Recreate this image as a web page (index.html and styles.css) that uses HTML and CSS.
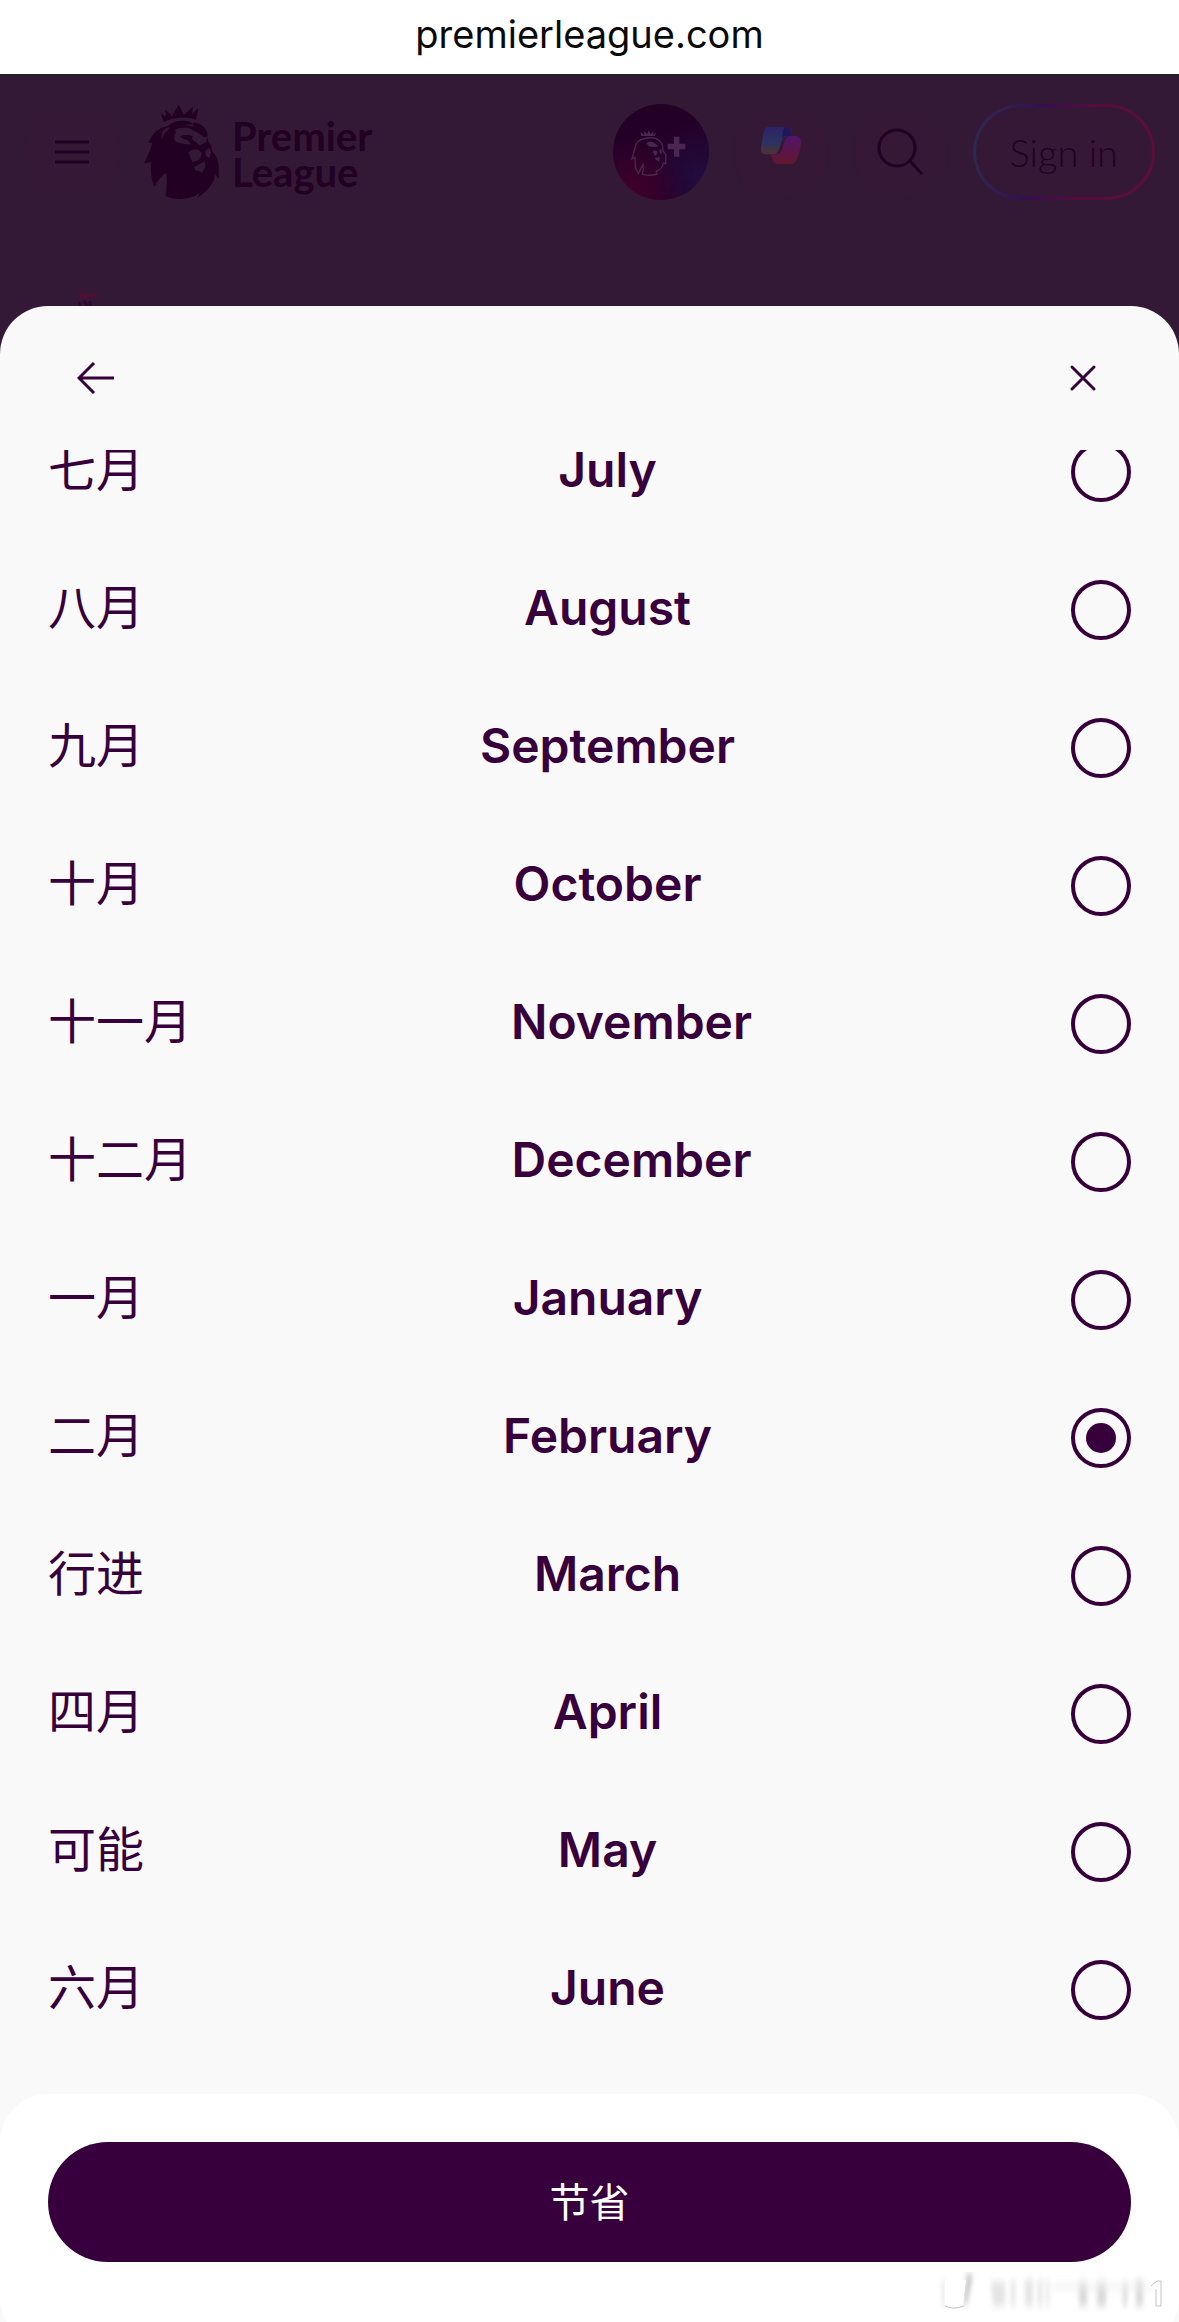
FILE: index.html
```html
<!DOCTYPE html>
<html lang="zh-CN">
<head>
<meta charset="utf-8">
<meta name="viewport" content="width=device-width, initial-scale=1">
<title>Premier League</title>
<link rel="stylesheet" href="styles.css">
</head>
<body>
<div class="page">
  <div class="address-bar">premierleague.com</div>

  <header class="site-header">
    <button class="round-button" type="button" aria-label="Menu">
      <svg width="36" height="24" viewBox="0 0 36 24" fill="none" stroke="currentColor" stroke-width="3"><path d="M1 2H35M1 12H35M1 22H35"/></svg>
    </button>
    <a class="brand" href="#">
      <svg class="brand-lion" viewBox="43 40 228 290" fill="currentColor" aria-hidden="true">
        <path d="M102 94 L92 68 L108 78 L107 57 L127 76 L147 42 L163 73 L190 47 L187 70 L207 52 L199 87 Q150 72 102 94Z"/>
        <path d="M112 108 Q140 84 180 93 L194 101 Q178 100 165 104 Q195 104 212 122 L190 106 L194 95 Q222 100 233 125 L235 151 L245 166 Q245 175 250 185 Q266 200 268 230 L268 265 L257 252 Q254 284 222 310 L202 324 L210 309 Q185 327 150 327 Q125 327 107 317 Q114 280 109 248 Q90 260 74 290 Q60 262 64 216 Q54 216 43 220 L62 176 L67 157 L56 157 Q65 130 88 116 Q98 108 112 108Z"/>
        <g fill="#331935">
          <path d="M116 110 Q94 112 95 148 Q102 126 118 116Z"/>
          <path d="M136 117 Q146 113 158 112 Q178 110 198 123 L214 133 Q224 144 232 138 L231 154 L211 166 L201 158 L186 144 L190 138 Q170 129 150 138 Q160 147 172 148 L186 162 Q150 163 136 151 Q130 138 138 126Z"/>
          <path d="M176 186 Q188 173 206 178 L217 188 Q216 203 205 211 L189 216 Q180 200 176 186Z"/>
          <path d="M227 181 L240 173 L244 186 L241 204 L229 197Z"/>
          <path d="M194 230 Q208 222 226 214 L228 229 L222 240 L216 250 Q212 240 198 241Z"/>
        </g>
      </svg>
      <span class="brand-name">Premier<br>League</span>
    </a>
    <nav class="header-actions" aria-label="Account">
      <a class="round-button plus-button" href="#" aria-label="Premier League Plus">
        <svg width="96" height="96" viewBox="0 0 288 288" fill="none" stroke="currentColor" stroke-width="4" aria-hidden="true">
          <path d="M85 96 L82 84 L93 92 L95 81 L102 91 L107 79 L113 91 L121 81 L121 92 L129 84 L125 96Z" fill="currentColor" stroke="none"/>
          <path d="M91 105 Q70 108 66 132 L57 165 L66 160 L67 190 L76 209 Q83 195 90 181 Q92 200 88 211 Q112 217 132 210 L130 202 Q148 195 151 177 L158 180 L159 155 Q157 148 150 141 Q151 113 130 104 Q110 98 91 105Z"/>
          <path d="M100 117 Q112 110 123 117 L137 126 Q124 132 107 127Z M119 141 Q127 137 134 144 Q133 152 126 156Z M139 137 L146 136 L146 151 L140 147Z M125 163 L140 158 L139 173 L132 169Z" fill="currentColor" stroke="none"/>
          <path d="M183 98H199V119H217V136H199V158H183V136H164V119H183Z" fill="currentColor" stroke="none"/>
        </svg>
      </a>
      <a class="round-button" href="#" aria-label="Copilot">
        <svg width="96" height="96" viewBox="0 0 288 288" aria-hidden="true">
          <defs>
            <linearGradient id="cool" x1="0" y1="0" x2="0" y2="1"><stop offset="0" stop-color="#2c2367"/><stop offset=".6" stop-color="#2c3360"/><stop offset="1" stop-color="#52302f"/></linearGradient>
            <linearGradient id="warm" x1="0" y1="0" x2="0" y2="1"><stop offset="0" stop-color="#51156b"/><stop offset="1" stop-color="#62172d"/></linearGradient>
          </defs>
          <path d="M103 69H159Q168 69 172 80L177 96H164Q150 97 146 111L137 139Q133 151 121 151H95Q81 146 84 129Q88 103 93 82Q96 70 103 69Z" fill="url(#cool)"/>
          <path d="M173 96H192Q206 101 204 117Q200 148 190 168Q185 180 175 180H134Q121 178 118 164L114 151H128Q143 150 148 136L155 113Q158 97 173 96Z" fill="url(#warm)"/>
          <path d="M159 69Q168 69 172 80L177 96H158Q150 96 147 104L150 79Q152 70 159 69Z" fill="#1e1757"/>
        </svg>
      </a>
      <button class="round-button" type="button" aria-label="Search">
        <svg width="48" height="48" viewBox="0 0 48 48" fill="none" stroke="currentColor" stroke-width="3"><circle cx="20" cy="20" r="18"/><path d="M32 32L45 46"/></svg>
      </button>
      <a class="sign-in" href="#">Sign in</a>
    </nav>
  </header>

  <div class="backdrop" aria-hidden="true">
    <svg width="20" height="16" viewBox="0 0 20 16" fill="none" stroke="#4b1036" stroke-width="3"><path d="M1 1L4 7M2 4L19 4M4 7L15 6"/><path d="M2 11V16M6 10L10 16M12 10V16" stroke="#2a0a33"/></svg>
  </div>

  <form class="sheet">
    <div class="sheet-header">
      <button class="icon-button" type="button" aria-label="返回">
        <svg width="38" height="32" viewBox="0 0 38 32" fill="none" stroke="currentColor" stroke-width="3"><path d="M17 1L2 16L17 31M2 16H37"/></svg>
      </button>
      <button class="icon-button" type="button" aria-label="关闭">
        <svg width="28" height="28" viewBox="0 0 28 28" fill="none" stroke="currentColor" stroke-width="3" stroke-linecap="round"><path d="M3 3L25 25M25 3L3 25"/></svg>
      </button>
    </div>

    <div class="months" role="radiogroup" aria-label="Month">
      <label class="month"><span class="month-local">七月</span><span class="month-name">July</span><input type="radio" name="month"></label>
      <label class="month"><span class="month-local">八月</span><span class="month-name">August</span><input type="radio" name="month"></label>
      <label class="month"><span class="month-local">九月</span><span class="month-name">September</span><input type="radio" name="month"></label>
      <label class="month"><span class="month-local">十月</span><span class="month-name">October</span><input type="radio" name="month"></label>
      <label class="month"><span class="month-local">十一月</span><span class="month-name">November</span><input type="radio" name="month"></label>
      <label class="month"><span class="month-local">十二月</span><span class="month-name">December</span><input type="radio" name="month"></label>
      <label class="month"><span class="month-local">一月</span><span class="month-name">January</span><input type="radio" name="month"></label>
      <label class="month"><span class="month-local">二月</span><span class="month-name">February</span><input type="radio" name="month" checked></label>
      <label class="month"><span class="month-local">行进</span><span class="month-name">March</span><input type="radio" name="month"></label>
      <label class="month"><span class="month-local">四月</span><span class="month-name">April</span><input type="radio" name="month"></label>
      <label class="month"><span class="month-local">可能</span><span class="month-name">May</span><input type="radio" name="month"></label>
      <label class="month"><span class="month-local">六月</span><span class="month-name">June</span><input type="radio" name="month"></label>
    </div>

    <div class="sheet-footer">
      <button class="save" type="submit">节省</button>
      <svg class="watermark" width="228" height="40" viewBox="0 0 228 40" aria-hidden="true">
        <defs>
          <filter id="soft" x="-20%" y="-20%" width="140%" height="140%"><feGaussianBlur stdDeviation="2 4"/></filter>
        </defs>
        <g filter="url(#soft)" fill="#e4e4e4">
          <path d="M30 2H36L30 32H26Z" fill="#c4c4c4"/>
          <path d="M5 8H8V34H5Z"/>
          <path d="M54 10H68V34H56Z M74 8H78V34H74Z M88 8H96V34H88Z M101 8H105V34H101Z M109 8H112V34H109Z"/>
          <path d="M142 10H150V34H142Z M160 10H169V34H160Z M186 10H190V34H186Z M199 8H206V34H199Z" fill="#d8d8d8"/>
          <path d="M116 13H216V17H116Z" fill="#ededed"/>
        </g>
        <path d="M8 8V32Q16 38 26 32L29 8Z" fill="#fff"/>
        <path d="M8 34Q16 38 27 34" fill="none" stroke="#c4c4c4" stroke-width="1"/>
        <path d="M214 14L220 9H224V34H219V17" fill="#fff" stroke="#c4c4c4" stroke-width="1"/>
      </svg>
    </div>
  </form>
</div>
</body>
</html>
```
FILE: styles.css
```css
:root {
  --ink: #37003c;
  --ink-dim: #210023;
  --dim: #331935;
  --sheet: #f9f9f9;
  --sans: Lato, "Noto Sans CJK SC", sans-serif;
  --wide: Inter, "Noto Sans CJK SC", sans-serif;
}

* { box-sizing: border-box; }

body {
  margin: 0;
  background: var(--dim);
  color: var(--ink);
  font-family: var(--sans);
}

button {
  border: 0;
  padding: 0;
  background: none;
  color: inherit;
  font: inherit;
}

a { color: inherit; text-decoration: none; }

svg { display: block; }

.page {
  display: flex;
  flex-direction: column;
  height: 100vh;
  overflow: hidden;
}

.address-bar {
  flex: none;
  height: 74px;
  background: #fff;
  color: #0a0a0a;
  font-family: var(--wide);
  font-size: 38px;
  line-height: 68px;
  text-align: center;
}

.site-header {
  display: flex;
  flex: none;
  align-items: center;
  gap: 24px;
  padding: 27px 24px 30px;
  border-top: 3px solid #2b1b2d;
  color: var(--ink-dim);
}

.round-button {
  display: flex;
  flex: none;
  align-items: center;
  justify-content: center;
  width: 96px;
  height: 96px;
  border-radius: 50%;
  background: #341836;
}

.plus-button {
  color: #4a2650;
  background:
    radial-gradient(circle at 20% 88%, #40002c, transparent 45%),
    radial-gradient(circle at 90% 75%, #220c40, transparent 50%),
    #230026;
}

.brand {
  display: flex;
  align-items: center;
  gap: 12px;
}

.brand-lion { width: 76px; height: 96px; }

.brand-name {
  padding-top: 4px;
  font-size: 40px;
  font-weight: 700;
  line-height: 36px;
}

.header-actions {
  display: flex;
  gap: 24px;
  margin-left: auto;
}

.sign-in {
  height: 96px;
  padding: 0 34px;
  border: 3px solid transparent;
  border-radius: 48px;
  background:
    linear-gradient(#341836, #341836) padding-box,
    linear-gradient(100deg, #2e2c4c, #330f56 35%, #550c3c 60%, #5c0e38) border-box;
  font-size: 38px;
  font-weight: 300;
  line-height: 90px;
}

.backdrop {
  flex: none;
  height: 76px;
  padding: 61px 78px 0;
}

.sheet {
  display: flex;
  flex: 1;
  flex-direction: column;
  min-height: 0;
  border-radius: 48px 48px 0 0;
  background: var(--sheet);
}

.sheet-header {
  display: flex;
  flex: none;
  justify-content: space-between;
  padding: 24px 48px;
}

.icon-button {
  display: flex;
  align-items: center;
  justify-content: center;
  width: 96px;
  height: 96px;
}

/* Scrolled to the end: the first month is cut by the top edge. */
.months {
  display: flex;
  flex: 1;
  flex-direction: column;
  justify-content: flex-end;
  min-height: 0;
  padding: 0 48px 35px;
  overflow: hidden;
}

.month {
  display: flex;
  flex: none;
  align-items: center;
  justify-content: space-between;
  height: 138px;
  font-size: 48px;
  line-height: 48px;
}

.month-local { padding-bottom: 6px; }

.month-name {
  padding-bottom: 4px;
  font-family: var(--wide);
  font-weight: 600;
}

.month input {
  display: grid;
  place-items: center;
  width: 60px;
  height: 60px;
  margin: 0;
  border: 4px solid var(--ink);
  border-radius: 50%;
  appearance: none;
}

.month input:checked::before {
  content: "";
  width: 30px;
  height: 30px;
  border-radius: 50%;
  background: var(--ink);
}

.sheet-footer {
  position: relative;
  flex: none;
  margin-bottom: -24px;
  padding: 48px 48px 84px;
  border-radius: 48px;
  background: #fff;
}

.save {
  display: block;
  width: 100%;
  height: 120px;
  padding-bottom: 4px;
  border-radius: 60px;
  background: var(--ink);
  color: #fff;
  font-size: 40px;
}

.watermark {
  position: absolute;
  right: 14px;
  bottom: 34px;
}
```
